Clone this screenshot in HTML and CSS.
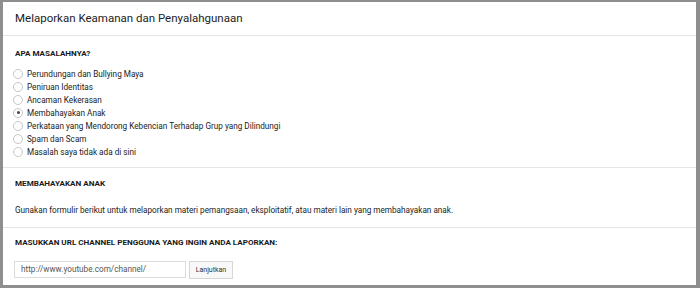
FILE: index.html
```html
<!DOCTYPE html>
<html>
<head>
<meta charset="utf-8">
<link rel="stylesheet" href="styles.css">
</head>
<body>
<div class="frame">
  <div class="title">Melaporkan Keamanan dan Penyalahgunaan</div>
  <div class="section s1">
    <div class="heading">APA MASALAHNYA?</div>
    <div class="options">
      <label class="opt"><span class="radio"></span>Perundungan dan Bullying Maya</label>
      <label class="opt"><span class="radio"></span>Peniruan Identitas</label>
      <label class="opt"><span class="radio"></span>Ancaman Kekerasan</label>
      <label class="opt"><span class="radio checked"></span>Membahayakan Anak</label>
      <label class="opt"><span class="radio"></span>Perkataan yang Mendorong Kebencian Terhadap Grup yang Dilindungi</label>
      <label class="opt"><span class="radio"></span>Spam dan Scam</label>
      <label class="opt"><span class="radio"></span>Masalah saya tidak ada di sini</label>
    </div>
  </div>
  <div class="section s2">
    <div class="heading">MEMBAHAYAKAN ANAK</div>
    <p class="desc">Gunakan formulir berikut untuk melaporkan materi pemangsaan, eksploitatif, atau materi lain yang membahayakan anak.</p>
  </div>
  <div class="section s3">
    <div class="heading">MASUKKAN URL CHANNEL PENGGUNA YANG INGIN ANDA LAPORKAN:</div>
    <div class="form">
      <div class="input">http://www.youtube.com/channel/</div>
      <div class="btn">Lanjutkan</div>
    </div>
  </div>
</div>
</body>
</html>
```
FILE: styles.css
```css
html, body { margin: 0; padding: 0; background: #fff; }
body { font-family: Roboto, "Liberation Sans", Arial, sans-serif; color: #222; }
.frame {
  width: 700px; height: 288px; box-sizing: border-box;
  border-style: solid; border-color: #8e8e8e;
  border-width: 2px 4px 3px 3px;
  background: #fff;
}
.title {
  font-size: 11.5px; line-height: 33px; height: 33px;
  padding-left: 12px; color: #222;
  border-bottom: 1px solid #e6e6e6;
}
.section { padding-left: 12px; border-bottom: 1px solid #e6e6e6; }
.section:last-child { border-bottom: none; }
.heading { font-size: 8.1px; font-weight: 700; line-height: 12px; color: #1a1a1a; }
.s1 { padding-top: 11px; height: 120px; }
.options { margin-top: 8px; display: flex; flex-direction: column; }
.opt { display: flex; align-items: center; height: 13px; font-size: 8.2px; color: #222; }
.radio {
  width: 10px; height: 10px; border: 1px solid #c6c6c6; border-radius: 50%;
  box-sizing: border-box; margin-left: -2px; margin-right: 4px; display: flex;
  align-items: center; justify-content: center; background: #fff;
}
.radio.checked::after { content: ""; width: 3px; height: 3px; border-radius: 50%; background: #444; }
.s2 { padding-top: 9px; height: 50px; }
.desc { margin: 15px 0 0; font-size: 8.2px; line-height: 13px; color: #222; }
.s3 { padding-top: 8px; }
.form { margin-top: 13px; display: flex; gap: 3px; }
.input {
  width: 172px; height: 17px; box-sizing: border-box; border: 1px solid #dcdcdc;
  font-size: 8.2px; line-height: 15px; padding-left: 6px; color: #555; margin-left: -1px;
}
.btn {
  width: 44px; height: 18px; box-sizing: border-box; border: 1px solid #d6d6d6;
  background: #f8f8f8; font-size: 7px; line-height: 16px; text-align: center; color: #333;
}
```
